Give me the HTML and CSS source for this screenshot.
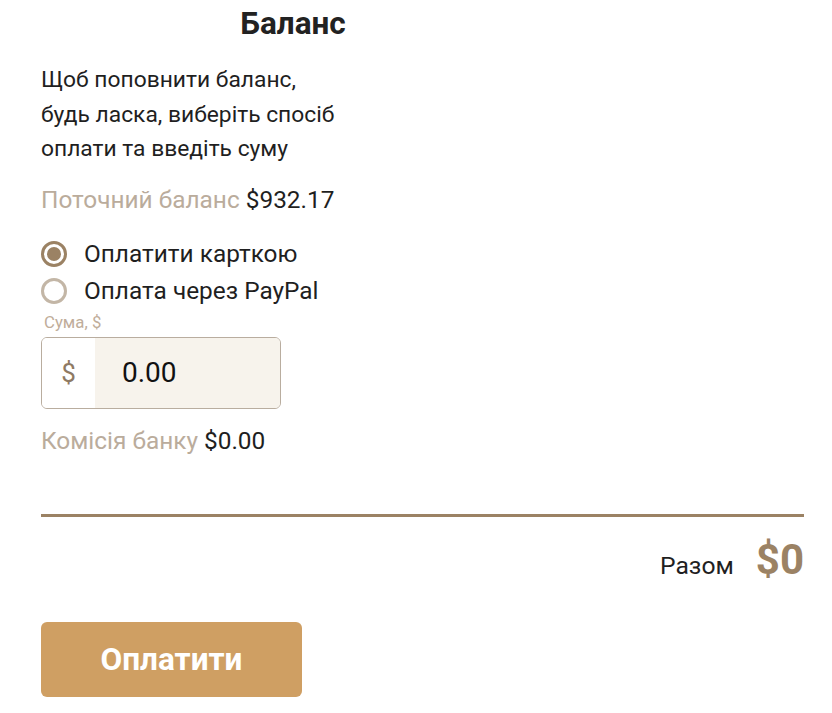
FILE: index.html
```html
<!DOCTYPE html>
<html lang="uk">
<head>
<meta charset="utf-8">
<title>Баланс</title>
<link rel="stylesheet" href="styles.css">
</head>
<body>
<div class="page">
  <h1 class="title">Баланс</h1>
  <p class="intro">Щоб поповнити баланс, будь ласка, виберіть спосіб оплати та введіть суму</p>
  <div class="balance"><span class="muted">Поточний баланс</span> $932.17</div>
  <div class="methods">
    <label class="radio"><span class="dot checked"></span><span>Оплатити карткою</span></label>
    <label class="radio"><span class="dot"></span><span>Оплата через PayPal</span></label>
  </div>
  <div class="field-label">Сума, $</div>
  <div class="amount">
    <span class="cur">$</span>
    <span class="value">0.00</span>
  </div>
  <div class="fee"><span class="muted">Комісія банку</span> $0.00</div>
  <div class="divider"></div>
  <div class="total"><span class="total-label">Разом</span><span class="total-value">$0</span></div>
  <button class="pay">Оплатити</button>
</div>
</body>
</html>
```
FILE: styles.css
```css
* { box-sizing: border-box; }
body {
  margin: 0;
  background: #fff;
  font-family: Roboto, "Liberation Sans", sans-serif;
  color: #1f1f1f;
}
.page {
  width: 804px;
  padding: 7px 0 0 41px;
  display: flex;
  flex-direction: column;
}
.title {
  margin: 0;
  width: 504px;
  text-align: center;
  font-size: 31.5px;
  font-weight: 700;
  line-height: 34px;
  color: #222;
}
.intro {
  margin: 22px 0 0;
  width: 305px;
  font-size: 22.8px;
  line-height: 34.5px;
}
.balance, .fee {
  font-size: 24.4px;
  line-height: 30px;
}
.balance { margin-top: 18px; }
.muted { color: #baac9c; }
.methods {
  margin-top: 24px;
  display: flex;
  flex-direction: column;
  gap: 7px;
}
.radio {
  display: flex;
  align-items: center;
  gap: 17px;
  font-size: 24.4px;
  line-height: 30px;
}
.dot {
  width: 26px;
  height: 26px;
  border-radius: 50%;
  border: 3px solid #c3b6a6;
  display: flex;
  align-items: center;
  justify-content: center;
  flex: none;
}
.dot.checked { border-color: #9b8264; }
.dot.checked::after {
  content: "";
  width: 14px;
  height: 14px;
  border-radius: 50%;
  background: #9b8264;
}
.field-label {
  margin-top: 7px;
  margin-left: 3px;
  font-size: 16.8px;
  line-height: 18px;
  color: #c0ad9a;
}
.amount {
  margin-top: 6px;
  width: 240px;
  height: 72px;
  border: 1px solid #b9ad9f;
  border-radius: 6px;
  display: flex;
  overflow: hidden;
}
.cur {
  width: 53px;
  display: flex;
  align-items: center;
  justify-content: center;
  font-size: 26px;
  color: #8f7a63;
  background: #fff;
}
.value {
  flex: 1;
  background: #f7f3ec;
  display: flex;
  align-items: center;
  padding-left: 27px;
  font-size: 28px;
  color: #111;
}
.fee { margin-top: 17px; }
.divider {
  margin-top: 58px;
  height: 3px;
  width: 763px;
  background: #9b8264;
}
.total {
  width: 763px;
  display: flex;
  justify-content: flex-end;
  align-items: baseline;
  gap: 22px;
  margin-top: 18px;
}
.total-label { font-size: 24.7px; }
.total-value {
  font-size: 42px;
  font-weight: 700;
  color: #9b8264;
}
.pay {
  margin-top: 38px;
  width: 261px;
  height: 75px;
  border: none;
  border-radius: 6px;
  background: #cf9f63;
  color: #fff;
  font-family: Roboto, "Liberation Sans", sans-serif;
  font-size: 31.5px;
  font-weight: 700;
  cursor: pointer;
}
```
